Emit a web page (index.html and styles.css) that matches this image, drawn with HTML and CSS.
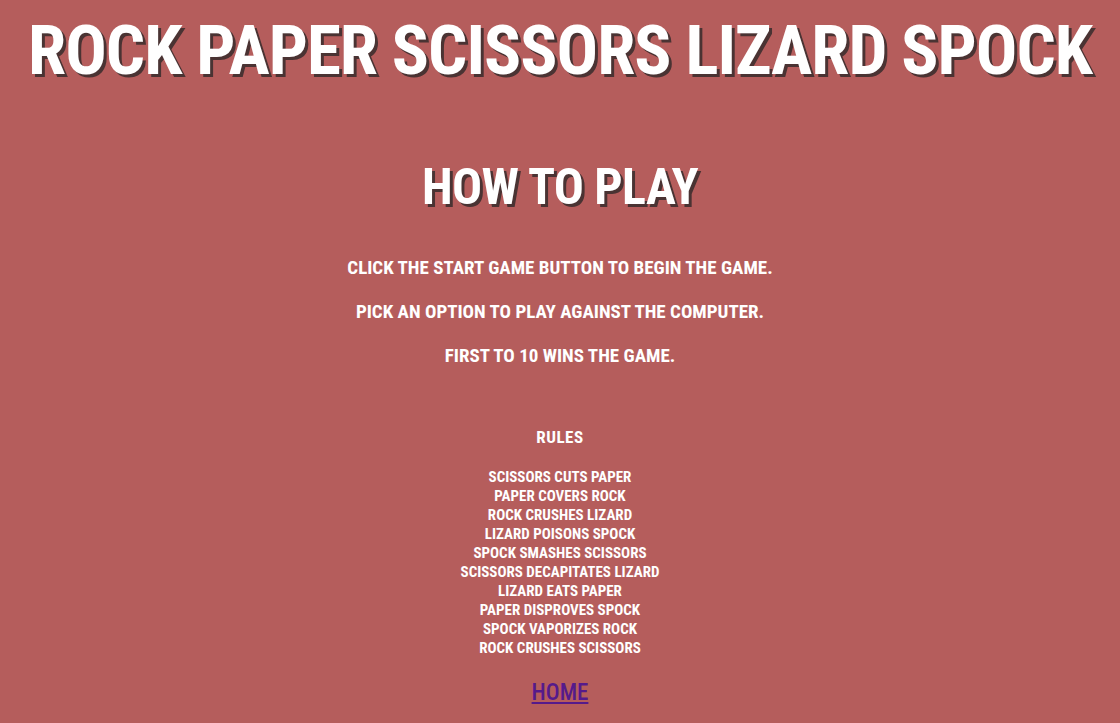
FILE: index.html
```html
<!DOCTYPE html>
<html>
<head>
<meta charset="utf-8">
<link rel="stylesheet" href="styles.css">
</head>
<body>
<header class="header">
  <h1 class="title">ROCK PAPER SCISSORS LIZARD SPOCK</h1>
</header>
<main class="main">
  <h2 class="subtitle">HOW TO PLAY</h2>
  <div class="instructions">
    <p>CLICK THE START GAME BUTTON TO BEGIN THE GAME.</p>
    <p>PICK AN OPTION TO PLAY AGAINST THE COMPUTER.</p>
    <p>FIRST TO 10 WINS THE GAME.</p>
  </div>
  <h3 class="rules-title">RULES</h3>
  <ul class="rules">
    <li>SCISSORS CUTS PAPER</li>
    <li>PAPER COVERS ROCK</li>
    <li>ROCK CRUSHES LIZARD</li>
    <li>LIZARD POISONS SPOCK</li>
    <li>SPOCK SMASHES SCISSORS</li>
    <li>SCISSORS DECAPITATES LIZARD</li>
    <li>LIZARD EATS PAPER</li>
    <li>PAPER DISPROVES SPOCK</li>
    <li>SPOCK VAPORIZES ROCK</li>
    <li>ROCK CRUSHES SCISSORS</li>
  </ul>
  <a class="home" href="#">HOME</a>
</main>
</body>
</html>
```
FILE: styles.css
```css
html, body {
  margin: 0;
  padding: 0;
}
body {
  background: #b55d5c;
  color: #ffffff;
  font-family: "Roboto", sans-serif;
  font-stretch: 75%;
  font-weight: bold;
  text-align: center;
  overflow: hidden;
}
.header {
  padding-top: 11px;
}
.title {
  margin: 0;
  font-size: 69px;
  line-height: 80px;
  letter-spacing: -1px;
  white-space: nowrap;
  text-shadow: 3px 3px 0 #4a3333;
}
.main {
  display: flex;
  flex-direction: column;
  align-items: center;
}
.subtitle {
  margin: 66px 0 0;
  font-size: 50px;
  line-height: 60px;
  letter-spacing: -0.6px;
  text-shadow: 3px 3px 0 #4a3333;
}
.instructions {
  margin-top: 39px;
  display: flex;
  flex-direction: column;
  gap: 20px;
}
.instructions p {
  margin: 0;
  font-size: 19px;
  line-height: 24px;
}
.rules-title {
  margin: 59px 0 0;
  font-size: 17px;
  line-height: 20px;
  letter-spacing: 0.5px;
}
.rules {
  list-style: none;
  margin: 21px 0 0;
  padding: 0;
}
.rules li {
  font-size: 15px;
  line-height: 19px;
}
.home {
  margin-top: 21px;
  font-size: 23px;
  line-height: 28px;
  color: #551a8b;
  font-weight: 500;
}
```
